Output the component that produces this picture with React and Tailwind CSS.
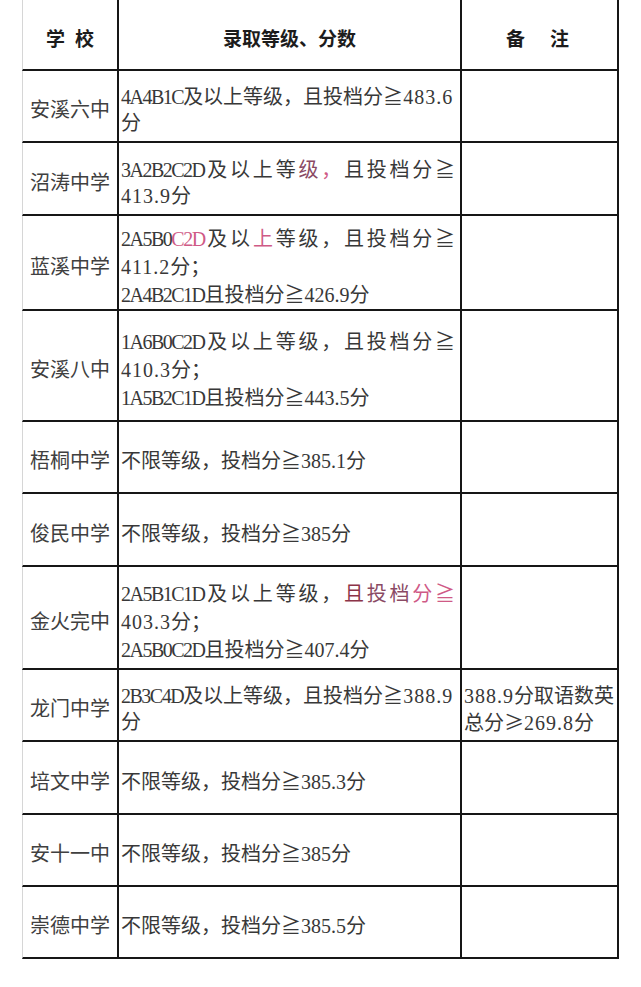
import React from 'react';

const pink = 'text-[#cf5a86]';
const dull = 'text-[#8a4a64]';
const wine = 'text-[#8c3448]';
const code = 'tracking-[-1.5px]';
const num = 'tracking-[1px]';

// each line: parts = [text, className?], j = justified across the cell
const rows = [
    {
        school: '安溪六中',
        h: 'h-[72px]',
        lines: [
            { parts: [['4A4B1C', code], ['及以上等级，且投档分≧'], ['483.6', num]] },
            { parts: [['分']] },
        ],
    },
    {
        school: '沼涛中学',
        h: 'h-[73px]',
        lines: [
            { j: true, parts: [['3A2B2C2D', code], ['及以上等'], ['级', dull], ['，', pink], ['且投档分≧']] },
            { parts: [['413.9', num], ['分']] },
        ],
    },
    {
        school: '蓝溪中学',
        h: 'h-[95px]',
        lines: [
            { j: true, parts: [['2A5B0', code], ['C2D', `${pink} ${code}`], ['及以'], ['上', pink], ['等级，且投档分≧']] },
            { parts: [['411.2', num], ['分；']] },
            { parts: [['2A4B2C1D', code], ['且投档分≧426.9分']] },
        ],
    },
    {
        school: '安溪八中',
        h: 'h-[111px]',
        lines: [
            { j: true, parts: [['1A6B0C2D', code], ['及以上等级，且投档分≧']] },
            { parts: [['410.3', num], ['分；']] },
            { parts: [['1A5B2C1D', code], ['且投档分≧443.5分']] },
        ],
    },
    { school: '梧桐中学', h: 'h-[72px]', lines: [{ parts: [['不限等级，投档分≧385.1分']] }] },
    { school: '俊民中学', h: 'h-[73px]', lines: [{ parts: [['不限等级，投档分≧385分']] }] },
    {
        school: '金火完中',
        h: 'h-[103px]',
        lines: [
            { j: true, parts: [['2A5B1C1D', code], ['及以上等级，'], ['且', wine], ['投档', dull], ['分≧', pink]] },
            { parts: [['403.3', num], ['分；']] },
            { parts: [['2A5B0C2D', code], ['且投档分≧407.4分']] },
        ],
    },
    {
        school: '龙门中学',
        h: 'h-[72px]',
        lines: [
            { parts: [['2B3C4D', code], ['及以上等级，且投档分≧'], ['388.9', num]] },
            { parts: [['分']] },
        ],
        note: true,
    },
    { school: '培文中学', h: 'h-[73px]', lines: [{ parts: [['不限等级，投档分≧385.3分']] }] },
    { school: '安十一中', h: 'h-[72px]', lines: [{ parts: [['不限等级，投档分≧385分']] }] },
    { school: '崇德中学', h: 'h-[72px]', lines: [{ parts: [['不限等级，投档分≧385.5分']] }] },
];

const serif = "font-['Liberation_Serif','Noto_Sans_CJK_SC',serif]";
const cell = 'border-b-2 border-r-2 border-[#161616] flex flex-col justify-center';

export default function App() {
    return (
        <div className="w-[641px] h-[987px] bg-white pl-[22px]">
            <div className={`w-[597px] text-[20px] text-[#383838] ${serif}`}>
                {/* header */}
                <div className="grid grid-cols-[97px_343px_157px] h-[71px] font-['Noto_Sans_CJK_SC',sans-serif] font-bold text-[19px] text-[#1c1c1c]">
                    <div className={`${cell} border-l border-l-[#d6d6d6] items-center pt-[7px]`}>
                        <div className="flex gap-[10px]"><span>学</span><span>校</span></div>
                    </div>
                    <div className={`${cell} items-center pt-[7px]`}>录取等级、分数</div>
                    <div className={`${cell} items-center pt-[7px]`}>
                        <div className="flex gap-[25px] pr-[4px]"><span>备</span><span>注</span></div>
                    </div>
                </div>

                {rows.map(r => {
                    const lead = r.lines.length === 2 ? 'leading-[26px]' : 'leading-[28px]';
                    return (
                        <div key={r.school} className={`grid grid-cols-[97px_343px_157px] ${r.h}`}>
                            <div className={`${cell} border-l border-l-[#d6d6d6] items-center pt-[8px] text-[#404040]`}>
                                {r.school}
                            </div>
                            <div className={`${cell} pl-[2px] pt-[8px] ${lead}`}>
                                {r.lines.map((l, i) => (
                                    <div
                                        key={i}
                                        className={l.j ? 'text-justify [text-align-last:justify] pr-[5px]' : 'whitespace-nowrap'}
                                    >
                                        {l.parts.map(([t, c], k) => (
                                            <span key={k} className={c}>{t}</span>
                                        ))}
                                    </div>
                                ))}
                            </div>
                            <div className={`${cell} pl-[2px] pt-[8px] leading-[26px]`}>
                                {r.note && (
                                    <>
                                        <div className="whitespace-nowrap">
                                            <span className={num}>388.9</span>分取语数英
                                        </div>
                                        <div className="whitespace-nowrap">
                                            总分<span className="font-['Noto_Sans_CJK_SC',sans-serif]">≥</span>
                                            <span className={num}>269.8</span>分
                                        </div>
                                    </>
                                )}
                            </div>
                        </div>
                    );
                })}
            </div>
        </div>
    );
}
